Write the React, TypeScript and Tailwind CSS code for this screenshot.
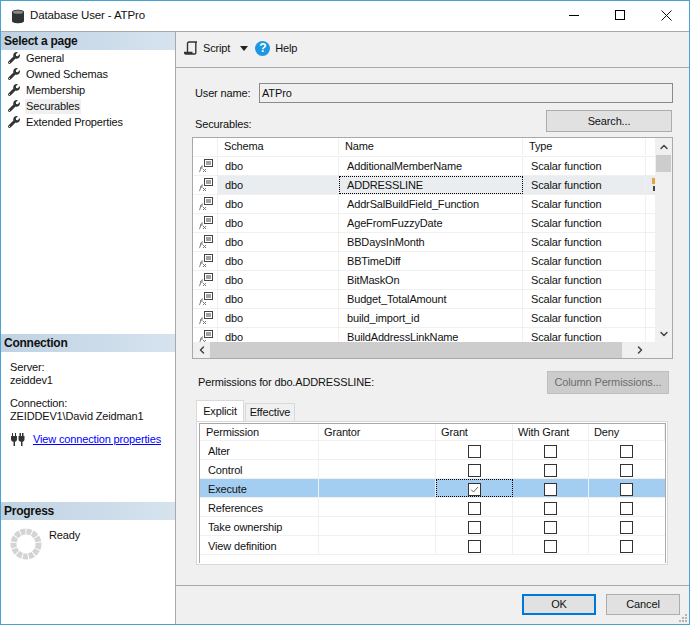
import { FaWrench } from "react-icons/fa";
import { ChevronLeft, ChevronRight, ChevronUp, ChevronDown } from "lucide-react";

const securables = [
  "AdditionalMemberName",
  "ADDRESSLINE",
  "AddrSalBuildField_Function",
  "AgeFromFuzzyDate",
  "BBDaysInMonth",
  "BBTimeDiff",
  "BitMaskOn",
  "Budget_TotalAmount",
  "build_import_id",
  "BuildAddressLinkName",
];

const pages = ["General", "Owned Schemas", "Membership", "Securables", "Extended Properties"];
const permissions = ["Alter", "Control", "Execute", "References", "Take ownership", "View definition"];

const SectionHeader = ({ title }: { title: string }) => (
  <div className="h-[18px] pl-[3px] flex items-center font-bold text-[12px] tracking-[-0.25px] bg-gradient-to-r from-[#c0d2e2] to-[#d6e3ef]">
    {title}
  </div>
);

const FunctionIcon = () => (
  <svg width="17" height="16" viewBox="0 0 17 16" fill="none">
    <rect x="7.5" y="1.5" width="8" height="7" fill="#fff" stroke="#444" />
    <path d="M9 4h5M9 6h5" stroke="#444" />
    <path d="M2 14c1.500 0 1.500-6 3-6h1M3 10h3M6 11l3 3M9 11l-3 3" stroke="#777" />
  </svg>
);

const Checkbox = ({ checked }: { checked?: boolean }) => (
  <div className="w-[13px] h-[13px] border border-[#333] bg-white flex items-center justify-center">
    {checked && (
      <svg width="11" height="11" viewBox="0 0 11 11" fill="none">
        <path d="M2 5.500l2.500 2.500L9 3" stroke="#666" strokeWidth="1" />
      </svg>
    )}
  </div>
);

const Spinner = () => (
  <svg width="32" height="32" viewBox="0 0 32 32" fill="none">
    <circle cx="16" cy="16" r="12.500" stroke="#d4d4d4" strokeWidth="6" strokeDasharray="4.900 1" />
  </svg>
);

export default function App() {
  return (
    <div className="w-[690px] h-[625px] flex flex-col border border-[#45a1d6] bg-white text-[11px] tracking-[-0.15px] leading-none text-[#111] whitespace-nowrap overflow-hidden font-['Liberation_Sans',sans-serif]">
      {/* Title bar */}
      <div className="h-[30px] flex items-center shrink-0 border-b border-[#a9a9a9] box-content">
        <svg className="ml-[10px]" width="14" height="15" viewBox="0 0 14 15">
          <path d="M1 3c0-3 12-3 12 0v9c0 3-12 3-12 0z" fill="#333" />
          <ellipse cx="7" cy="3.200" rx="5" ry="1.600" fill="#888" />
        </svg>
        <span className="ml-[5px] text-[11.5px]">Database User - ATPro</span>
        <div className="ml-auto flex items-center pb-[2px]">
          <div className="w-[46px] flex justify-center"><div className="w-[10px] h-px bg-black" /></div>
          <div className="w-[46px] flex justify-center"><div className="w-[10px] h-[10px] border border-black" /></div>
          <div className="w-[46px] flex justify-center">
            <svg width="11" height="11" viewBox="0 0 11 11"><path d="M.5.5l10 10M10.500.5l-10 10" stroke="#111" /></svg>
          </div>
        </div>
      </div>

      <div className="flex-1 flex min-h-0">
        {/* Left panel */}
        <div className="w-[174px] shrink-0 flex flex-col border-r border-[#a9a9a9] box-content">
          <div className="h-[302px] shrink-0">
            <SectionHeader title="Select a page" />
            {pages.map((page) => (
              <div key={page} className="h-[16px] flex items-center pl-[7px]">
                <FaWrench className="text-[#333] w-[12px] h-[12px]" />
                <span className={`ml-[5px] px-[1px] h-[15px] flex items-center ${page === "Securables" ? "bg-[#f0f0f0]" : ""}`}>
                  {page}
                </span>
              </div>
            ))}
          </div>

          <div className="h-[168px] shrink-0">
            <SectionHeader title="Connection" />
            <div className="pl-[9px] pt-[9px]">
              <div className="h-[13px] flex items-center">Server:</div>
              <div className="h-[13px] flex items-center">zeiddev1</div>
              <div className="h-[13px] mt-[10px] flex items-center">Connection:</div>
              <div className="h-[13px] flex items-center">ZEIDDEV1\David Zeidman1</div>
              <div className="flex items-center mt-[10px]">
                <svg className="ml-[1px]" width="14" height="13" viewBox="0 0 14 13" fill="#333">
                  <path d="M0 3h6v3c0 2-1 2.500-2 2.700V13H2.500V8.700C1 8.500 0 8 0 6zM1 0h1v3H1zM4 0h1v3H4z" />
                  <path d="M7.500 3h6v3c0 2-1 2.500-2 2.700V13H10V8.700C8.500 8.500 7.500 8 7.500 6zM8.500 0h1.500v3H8.500zM11 0h1.500v3H11z" />
                </svg>
                <a className="ml-[8px] text-[#0000ff] underline">View connection properties</a>
              </div>
            </div>
          </div>

          <div className="flex-1">
            <SectionHeader title="Progress" />
            <div className="flex pl-[9px] pt-[7px]">
              <div className="mt-[1px]"><Spinner /></div>
              <span className="ml-[7px] mt-[3px]">Ready</span>
            </div>
          </div>
        </div>

        {/* Right panel */}
        <div className="flex-1 flex flex-col bg-[#f0f0f0] min-w-0">
          <div className="h-[35px] shrink-0 flex items-center border-b border-[#a9a9a9] box-content pl-[8px] pb-0">
            <div className="flex items-center pb-[3px]">
              <svg width="14" height="14" viewBox="0 0 14 14" fill="none" stroke="#333" strokeWidth="1.4">
                <path d="M3.500 11V2.500c0-1 .5-1.500 1.500-1.500h8c-1 0-1.200.5-1.200 1.500V12c0 .7-.5 1-1.300 1H2c-1 0-1.500-.5-1.500-1.500h8" />
              </svg>
              <span className="ml-[5px]">Script</span>
              <svg className="ml-[10px]" width="8" height="5" viewBox="0 0 8 5"><path d="M0 0h8L4 5z" fill="#222" /></svg>
              <div className="ml-[7px] w-[15px] h-[15px] rounded-full bg-[#1c97e0] text-white font-bold text-[12px] flex items-center justify-center">?</div>
              <span className="ml-[5px]">Help</span>
            </div>
          </div>

          <div className="flex-1 flex flex-col min-h-0">
            <div className="flex items-center h-[20px] mt-[15px] ml-[19px] mr-[16px]">
              <span className="w-[64px] pt-[1px]">User name:</span>
              <div className="w-[414px] h-[20px] border border-[#8a8a8a] bg-[#f0f0f0] flex items-center pl-[2px]">ATPro</div>
            </div>

            <div className="flex items-center justify-between h-[22px] mt-[7px] ml-[19px] mr-[17px]">
              <span className="pt-[6px]">Securables:</span>
              <div className="w-[126px] h-[22px] border border-[#adadad] bg-[#e1e1e1] flex items-center justify-center">Search...</div>
            </div>

            {/* Securables grid */}
            <div className="relative ml-[16px] mt-[5px] w-[481px] h-[222px] border border-[#a9a9a9] bg-white flex flex-col overflow-hidden">
              <div className="flex flex-1 min-h-0">
                <div className="flex-1 min-w-0 overflow-hidden">
                  <div className="grid grid-cols-[25px_121px_184px_123px_9px] h-[19px] pb-[1px] border-b border-[#f0f0f0]">
                    <div className="border-r border-[#f0f0f0]" />
                    <div className="flex items-center pl-[6px] border-r border-[#f0f0f0]">Schema</div>
                    <div className="flex items-center pl-[6px] border-r border-[#f0f0f0]">Name</div>
                    <div className="flex items-center pl-[6px] border-r border-[#f0f0f0]">Type</div>
                    <div />
                  </div>
                  {securables.map((name, i) => (
                    <div
                      key={name}
                      className={`grid grid-cols-[25px_121px_184px_123px_9px] h-[19px] border-b border-[#f0f0f0] ${i === 1 ? "bg-[#e9edf0]" : ""}`}
                    >
                      <div className="flex items-center justify-center bg-white border-r border-[#f0f0f0]"><FunctionIcon /></div>
                      <div className="flex items-center pl-[7px] border-r border-[#f0f0f0]">dbo</div>
                      <div className={`flex items-center ${i === 1 ? "pl-[7px] border border-dotted border-black" : "pl-[8px] border-r border-[#f0f0f0]"}`}>{name}</div>
                      <div className="flex items-center pl-[8px] border-r border-[#f0f0f0]">Scalar function</div>
                      <div className="relative">
                        {i === 1 && (
                          <>
                            <div className="absolute left-[6px] top-[2px] w-[3px] h-[6px] bg-[#e8a33d]" />
                            <div className="absolute left-[7px] top-[10px] w-[2px] h-[5px] bg-[#444]" />
                          </>
                        )}
                      </div>
                    </div>
                  ))}
                </div>
                {/* Vertical scrollbar */}
                <div className="w-[17px] shrink-0 bg-[#f0f0f0] flex flex-col items-center">
                  <div className="h-[17px] flex items-center"><ChevronUp className="w-[12px] h-[12px] text-[#444]" strokeWidth={3} /></div>
                  <div className="w-[15px] h-[17px] bg-[#cdcdcd]" />
                  <div className="flex-1" />
                  <div className="h-[17px] flex items-center"><ChevronDown className="w-[12px] h-[12px] text-[#444]" strokeWidth={3} /></div>
                </div>
              </div>
              {/* Horizontal scrollbar */}
              <div className="h-[16px] shrink-0 bg-[#f0f0f0] flex items-center">
                <div className="w-[17px] flex justify-center"><ChevronLeft className="w-[12px] h-[12px] text-[#444]" strokeWidth={3} /></div>
                <div className="w-[412px] h-[16px] bg-[#cdcdcd]" />
                <div className="w-[35px] flex justify-center"><ChevronRight className="w-[12px] h-[12px] text-[#444]" strokeWidth={3} /></div>
              </div>
            </div>

            <div className="flex items-center justify-between h-[23px] mt-[12px] ml-[22px] mr-[20px]">
              <span>Permissions for dbo.ADDRESSLINE:</span>
              <div className="w-[122px] h-[23px] border border-[#bfbfbf] bg-[#cccccc] text-[#6d6d6d] flex items-center justify-center">Column Permissions...</div>
            </div>

            {/* Tabs */}
            <div className="flex items-end ml-[20px] mt-[6px] h-[21px]">
              <div className="w-[48px] h-[21px] bg-white border border-b-0 border-[#d9d9d9] flex items-center justify-center">Explicit</div>
              <div className="ml-[1px] w-[50px] h-[18px] border border-b-0 border-[#d9d9d9] bg-[#f0f0f0] flex items-center justify-center">Effective</div>
            </div>
            <div className="ml-[20px] w-[472px] h-[144px] border border-[#d9d9d9] bg-white pt-[1px] pl-[2px] pr-[1px] pb-[1px]">
              <div className="h-full border-l border-t border-r border-[#a9a9a9]">
                <div className="grid grid-cols-[119px_117px_77px_76px_76px] h-[17px] border-b border-[#f0f0f0]">
                  {["Permission", "Grantor", "Grant", "With Grant", "Deny"].map((head) => (
                    <div key={head} className={`flex items-center border-r border-[#f0f0f0] ${head === "Permission" ? "pl-[6px]" : "pl-[5px]"}`}>{head}</div>
                  ))}
                </div>
                {permissions.map((perm) => {
                  const active = perm === "Execute";
                  return (
                    <div
                      key={perm}
                      className={`grid grid-cols-[119px_117px_77px_76px_76px] h-[19px] border-b border-[#f0f0f0] ${active ? "bg-[#a3cef1]" : ""}`}
                    >
                      <div className={`flex items-center pl-[8px] pt-[2px] border-r ${active ? "border-[#e8f2fb]" : "border-[#f0f0f0]"}`}>{perm}</div>
                      <div className={`border-r ${active ? "border-[#e8f2fb]" : "border-[#f0f0f0]"}`} />
                      <div className={`flex items-center justify-center pt-[2px] ${active ? "border border-dotted border-black" : "border-r border-[#f0f0f0]"}`}>
                        <Checkbox checked={active} />
                      </div>
                      <div className={`flex items-center justify-center pt-[2px] border-r ${active ? "border-[#e8f2fb]" : "border-[#f0f0f0]"}`}><Checkbox /></div>
                      <div className="flex items-center justify-center pt-[2px] pr-[1px]"><Checkbox /></div>
                    </div>
                  );
                })}
              </div>
            </div>

            <div className="flex-1" />
            <div className="relative h-[39px] shrink-0 border-t border-[#a9a9a9] flex items-start justify-end pt-[8px] pr-[9px] gap-[10px]">
              <div className="w-[74px] h-[21px] border-2 border-[#0078d7] bg-[#e1e1e1] flex items-center justify-center">OK</div>
              <div className="w-[74px] h-[21px] border border-[#adadad] bg-[#e1e1e1] flex items-center justify-center">Cancel</div>
              <svg className="absolute right-[1px] bottom-[1px]" width="10" height="10" viewBox="0 0 10 10" fill="#b5b5b5">
                <path d="M7 1h2v2H7zM4 4h2v2H4zM7 4h2v2H7zM1 7h2v2H1zM4 7h2v2H4zM7 7h2v2H7z" />
              </svg>
            </div>
          </div>
        </div>
      </div>
    </div>
  );
}
